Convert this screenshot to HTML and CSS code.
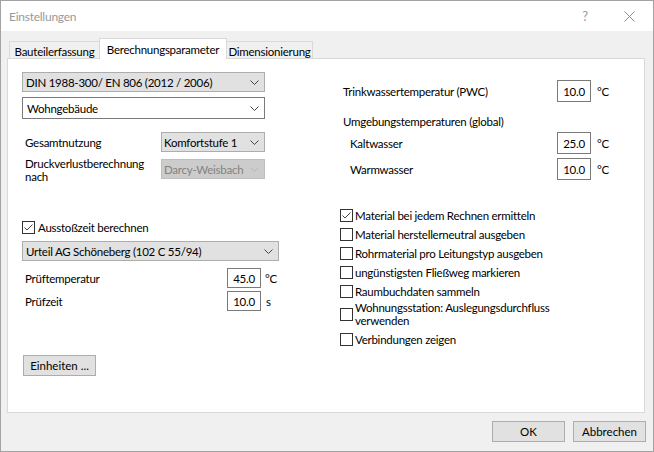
FILE: index.html
```html
<!DOCTYPE html>
<html lang="de">
<head>
<meta charset="utf-8">
<title>Einstellungen</title>
<link rel="stylesheet" href="styles.css">
</head>
<body>
<div class="window">
  <div class="titlebar">
    <span class="title">Einstellungen</span>
    <span class="help">?</span>
    <svg class="close" width="11" height="11" viewBox="0 0 11 11"><path d="M0.5 0.5 L10.5 10.5 M10.5 0.5 L0.5 10.5" stroke="#8c8c8c" stroke-width="1" fill="none"/></svg>
  </div>
  <div class="tabs">
    <div class="tab tab-first">Bauteilerfassung</div>
    <div class="tab active">Berechnungsparameter</div>
    <div class="tab tab-last">Dimensionierung</div>
  </div>
  <div class="panel">
    <div class="col col-left">
      <div class="combo combo-full">
        <span>DIN 1988-300/ EN 806 (2012 / 2006)</span>
        <svg class="chev" width="9" height="5" viewBox="0 0 9 5"><polyline points="0.5,0.5 4.5,4.5 8.5,0.5" fill="none" stroke="#444" stroke-width="1"/></svg>
      </div>
      <div class="combo combo-full combo-white">
        <span>Wohngebäude</span>
        <svg class="chev" width="9" height="5" viewBox="0 0 9 5"><polyline points="0.5,0.5 4.5,4.5 8.5,0.5" fill="none" stroke="#444" stroke-width="1"/></svg>
      </div>
      <div class="row row-gesamt">
        <span class="lbl lbl-combo">Gesamtnutzung</span>
        <div class="combo combo-small">
          <span>Komfortstufe 1</span>
          <svg class="chev" width="9" height="5" viewBox="0 0 9 5"><polyline points="0.5,0.5 4.5,4.5 8.5,0.5" fill="none" stroke="#444" stroke-width="1"/></svg>
        </div>
      </div>
      <div class="row row-druck">
        <span class="lbl lbl-combo lbl-two">Druckverlustberechnung<br>nach</span>
        <div class="combo combo-small combo-disabled">
          <span>Darcy-Weisbach</span>
          <svg class="chev" width="9" height="5" viewBox="0 0 9 5"><polyline points="0.5,0.5 4.5,4.5 8.5,0.5" fill="none" stroke="#b5b5b5" stroke-width="1"/></svg>
        </div>
      </div>
      <label class="check check-aus">
        <span class="box"><svg width="11" height="11" viewBox="0 0 11 11"><polyline points="1.5,5.5 4,8 9.5,2.5" fill="none" stroke="#444" stroke-width="1"/></svg></span>
        <span class="check-text">Ausstoßzeit berechnen</span>
      </label>
      <div class="combo combo-wide">
        <span>Urteil AG Schöneberg (102 C 55/94)</span>
        <svg class="chev" width="9" height="5" viewBox="0 0 9 5"><polyline points="0.5,0.5 4.5,4.5 8.5,0.5" fill="none" stroke="#444" stroke-width="1"/></svg>
      </div>
      <div class="row row-pruef">
        <span class="lbl lbl-left">Prüftemperatur</span>
        <span class="num num-small">45.0</span>
        <span class="unit unit-left">°C</span>
      </div>
      <div class="row row-zeit">
        <span class="lbl lbl-left">Prüfzeit</span>
        <span class="num num-small">10.0</span>
        <span class="unit unit-s">s</span>
      </div>
      <button class="btn btn-units">Einheiten ...</button>
    </div>
    <div class="col col-right">
      <div class="row row-pwc">
        <span class="lbl lbl-right">Trinkwassertemperatur (PWC)</span>
        <span class="num">10.0</span>
        <span class="unit">°C</span>
      </div>
      <div class="heading">Umgebungstemperaturen (global)</div>
      <div class="row row-kalt">
        <span class="lbl lbl-right lbl-indent">Kaltwasser</span>
        <span class="num">25.0</span>
        <span class="unit">°C</span>
      </div>
      <div class="row row-warm">
        <span class="lbl lbl-right lbl-indent">Warmwasser</span>
        <span class="num">10.0</span>
        <span class="unit">°C</span>
      </div>
      <div class="checks">
        <label class="check">
          <span class="box"><svg width="11" height="11" viewBox="0 0 11 11"><polyline points="1.5,5.5 4,8 9.5,2.5" fill="none" stroke="#444" stroke-width="1"/></svg></span>
          <span class="check-text">Material bei jedem Rechnen ermitteln</span>
        </label>
        <label class="check"><span class="box"></span><span class="check-text">Material herstellerneutral ausgeben</span></label>
        <label class="check"><span class="box"></span><span class="check-text">Rohrmaterial pro Leitungstyp ausgeben</span></label>
        <label class="check"><span class="box"></span><span class="check-text">ungünstigsten Fließweg markieren</span></label>
        <label class="check"><span class="box"></span><span class="check-text">Raumbuchdaten sammeln</span></label>
        <label class="check check-two"><span class="box"></span><span class="check-text">Wohnungsstation: Auslegungsdurchfluss<br>verwenden</span></label>
        <label class="check check-last"><span class="box"></span><span class="check-text">Verbindungen zeigen</span></label>
      </div>
    </div>
  </div>
  <div class="footer">
    <button class="btn">OK</button>
    <button class="btn">Abbrechen</button>
  </div>
</div>
</body>
</html>
```
FILE: styles.css
```css
* { box-sizing: border-box; }
html, body { margin: 0; padding: 0; background: #fff; }
body {
  font-family: Lato, "Liberation Sans", sans-serif;
  font-size: 11.5px;
  letter-spacing: -0.25px;
  color: #000;
}
.window {
  width: 654px;
  height: 452px;
  border: 1px solid #a3a3a3;
  background: #f0f0f0;
  display: flex;
  flex-direction: column;
}
.titlebar {
  height: 30px;
  flex: none;
  background: #fff;
  display: flex;
  align-items: center;
  padding: 0 18px 0 8px;
  color: #999;
  font-size: 12px;
}
.title { flex: 1; }
.help { width: 12px; text-align: center; font-size: 13px; }
.close { margin-left: 33px; flex: none; }

.tabs {
  height: 27px;
  flex: none;
  display: flex;
  align-items: flex-end;
  padding-left: 8px;
}
.tab {
  height: 17px;
  border: 1px solid #d9d9d9;
  border-bottom: none;
  background: #f0f0f0;
  display: flex;
  align-items: center;
  justify-content: center;
  padding-top: 2px;
  white-space: nowrap;
}
.tab-first { width: 90px; border-right: none; }
.tab-last { width: 86px; border-left: none; }
.tab.active {
  width: 128px;
  height: 21px;
  background: #fff;
  margin-bottom: -1px;
  padding-top: 0;
  position: relative;
  z-index: 1;
}

.panel {
  height: 355px;
  flex: none;
  margin: 0 8px 0 6px;
  background: #fff;
  border: 1px solid #d9d9d9;
  padding: 13px 0 0 14px;
  display: grid;
  grid-template-columns: 318px 1fr;
  align-items: start;
}
.col { display: flex; flex-direction: column; align-items: flex-start; }

.combo {
  height: 20px;
  border: 1px solid #adadad;
  background: #e1e1e1;
  display: flex;
  align-items: center;
  justify-content: space-between;
  padding: 0 5px 0 3px;
  white-space: nowrap;
}
.combo-full { width: 243px; }
.combo-white { height: 22px; margin-top: 5px; background: #fff; border-color: #7a7a7a; padding-left: 4px; }
.combo-small { width: 104px; padding-left: 2px; }
.combo-wide { width: 257px; margin-top: 4px; }
.combo-disabled { background: #cccccc; border-color: #bfbfbf; color: #838383; }
.chev { flex: none; }

.row { display: flex; align-items: center; }
.lbl { padding-left: 3px; white-space: nowrap; }
.lbl-combo { width: 139px; }
.lbl-left { width: 205px; }
.lbl-right { width: 217px; }
.lbl-indent { padding-left: 10px; }
.lbl-two { line-height: 13px; margin-top: -2px; }
.row-gesamt { margin-top: 13px; }
.row-druck { margin-top: 7px; height: 20px; align-items: flex-start; }
.row-pruef { margin-top: 7px; }
.row-zeit { margin-top: 3px; }

.num {
  width: 34px;
  height: 22px;
  border: 1px solid #7a7a7a;
  background: #fff;
  display: flex;
  align-items: center;
  justify-content: center;
}
.num-small { height: 20px; }
.unit { margin-left: 6px; }
.unit-left { margin-left: 4px; }
.unit-s { margin-left: 5px; }

.check { display: flex; align-items: center; height: 19px; }
.box {
  width: 13px;
  height: 13px;
  flex: none;
  border: 1px solid #333;
  background: #fff;
  display: flex;
}
.check-text { margin-left: 2px; white-space: nowrap; line-height: 13px; }
.check-aus { margin-top: 39px; }
.check-aus .check-text { margin-left: 3px; }
.check-two { height: 26px; }
.check-last { margin-top: 3px; }

.row-pwc { margin-top: 8px; }
.heading { margin-top: 12px; line-height: 16px; padding-left: 3px; }
.row-kalt { margin-top: 2px; }
.row-warm { margin-top: 4px; }
.checks { margin-top: 26px; display: flex; flex-direction: column; }

.btn {
  width: 73px;
  height: 21px;
  border: 1px solid #adadad;
  background: #e1e1e1;
  font: inherit;
  color: #000;
  padding: 0;
}
.btn-units { margin-top: 44px; margin-left: 1px; }

.footer {
  display: flex;
  justify-content: flex-end;
  gap: 8px;
  padding: 8px 7px 0 0;
}
```
